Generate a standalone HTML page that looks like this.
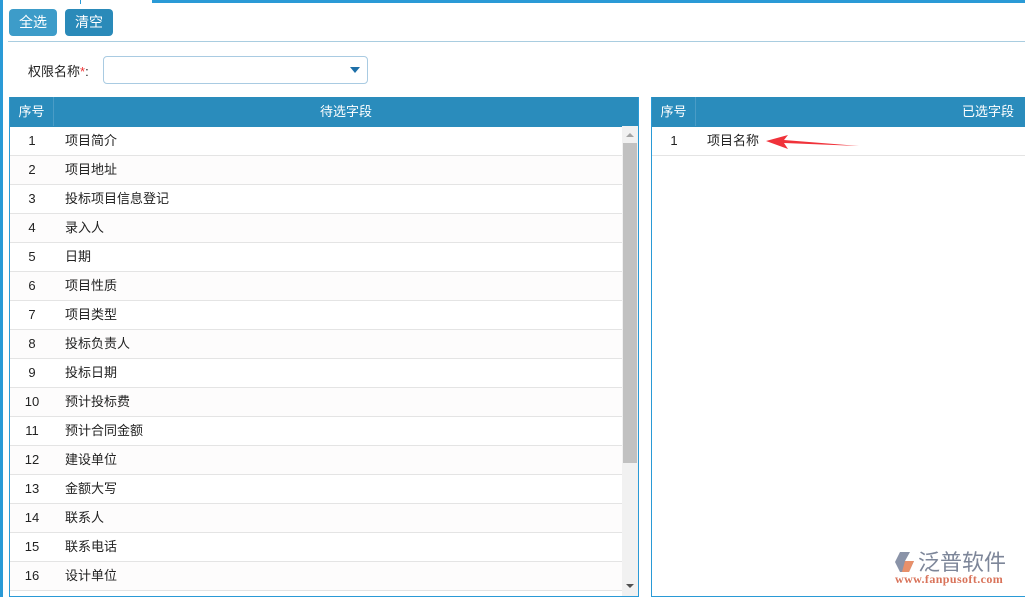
<!DOCTYPE html>
<html><head><meta charset="utf-8"><style>
*{margin:0;padding:0;box-sizing:border-box}
body{width:1025px;height:597px;overflow:hidden;background:#fff;font-family:"Liberation Sans","Noto Sans CJK SC",sans-serif;font-size:13px;color:#222;position:relative}
.abs{position:absolute}
.btn{position:absolute;top:9px;height:27px;border-radius:4px;color:#fff;font-size:14px;line-height:27px;text-align:center}
.tbl{position:absolute;top:97px;border:1px solid #2a9ad6;border-top:none;overflow:hidden}
.hd{height:30px;background:#2a8cbc;color:#fff;font-size:13px;position:relative}
.row{height:29px;border-bottom:1px solid #e4e4e4;position:relative;line-height:28px}
.row:nth-child(even){background:#fdfcfc}
.n{position:absolute;left:0;width:44px;text-align:center}
.t{position:absolute;left:55px}
</style></head><body>
<div class="abs" style="left:0;top:0;width:3px;height:597px;background:#2a9ad6"></div>
<div class="abs" style="left:152px;top:0;width:873px;height:3px;background:#2a9ad6"></div>
<div class="abs" style="left:80px;top:0;width:1px;height:4px;background:#2a9ad6"></div>
<div class="btn" style="left:9px;width:48px;background:#3d9cc9">全选</div>
<div class="btn" style="left:65px;width:48px;background:#2a8ab9">清空</div>
<div class="abs" style="left:8px;top:41px;width:1017px;height:1px;background:#a9cde0"></div>
<div class="abs" style="left:28px;top:61px;font-size:13px">权限名称<span style="color:#e33">*</span>:</div>
<div class="abs" style="left:103px;top:56px;width:265px;height:28px;border:1px solid #a9cbe2;border-radius:4px"></div>
<div class="abs" style="left:350px;top:67px;width:0;height:0;border-left:5px solid transparent;border-right:5px solid transparent;border-top:6px solid #1d6fa8"></div>
<div class="tbl" style="left:9px;width:630px;height:500px">
 <div class="hd"><div class="n" style="line-height:29px;height:29px;border-right:1px solid #4a9cc6">序号</div><div style="position:absolute;left:44px;right:0;text-align:center;line-height:29px">待选字段</div></div>
 <div style="position:relative;width:612px">
 <div class="row"><span class="n">1</span><span class="t">项目简介</span></div>
 <div class="row"><span class="n">2</span><span class="t">项目地址</span></div>
 <div class="row"><span class="n">3</span><span class="t">投标项目信息登记</span></div>
 <div class="row"><span class="n">4</span><span class="t">录入人</span></div>
 <div class="row"><span class="n">5</span><span class="t">日期</span></div>
 <div class="row"><span class="n">6</span><span class="t">项目性质</span></div>
 <div class="row"><span class="n">7</span><span class="t">项目类型</span></div>
 <div class="row"><span class="n">8</span><span class="t">投标负责人</span></div>
 <div class="row"><span class="n">9</span><span class="t">投标日期</span></div>
 <div class="row"><span class="n">10</span><span class="t">预计投标费</span></div>
 <div class="row"><span class="n">11</span><span class="t">预计合同金额</span></div>
 <div class="row"><span class="n">12</span><span class="t">建设单位</span></div>
 <div class="row"><span class="n">13</span><span class="t">金额大写</span></div>
 <div class="row"><span class="n">14</span><span class="t">联系人</span></div>
 <div class="row"><span class="n">15</span><span class="t">联系电话</span></div>
 <div class="row"><span class="n">16</span><span class="t">设计单位</span></div>
 </div>
 <div style="position:absolute;left:612px;top:29px;width:16px;height:471px;background:#f1f1f1">
  <div style="position:absolute;left:4px;top:7px;border-left:4px solid transparent;border-right:4px solid transparent;border-bottom:4px solid #a3a3a3"></div>
  <div style="position:absolute;left:1px;top:17px;width:14px;height:320px;background:#c1c1c1"></div>
  <div style="position:absolute;left:4px;top:458px;border-left:4px solid transparent;border-right:4px solid transparent;border-top:4px solid #505050"></div>
 </div>
</div>
<div class="tbl" style="left:651px;width:380px;height:500px">
 <div class="hd"><div class="n" style="line-height:29px;height:29px;border-right:1px solid #4a9cc6">序号</div><div style="position:absolute;right:16px;line-height:29px">已选字段</div></div>
 <div class="row" style="background:#fff"><span class="n">1</span><span class="t">项目名称</span></div>
</div>
<svg class="abs" style="left:766px;top:135px" width="94" height="16"><polygon points="0,6 22,0 18,5 93,11 18,8 22,14" fill="#f0323a"/></svg>
<svg class="abs" style="left:894px;top:550px" width="24" height="24"><polygon points="6,2 16,2 11,11 20,11 15,22 6,22 1,12" fill="#8a93a8"/><polygon points="11,11 20,11 15,22 8,22" fill="#e8906a"/></svg>
<div class="abs" style="left:918px;top:545px;font-size:22px;color:#7d8699">泛普软件</div>
<div class="abs" style="left:895px;top:572px;font-size:12px;color:#d9735a;font-family:'Liberation Serif',serif;font-weight:bold;letter-spacing:0.4px">www.fanpusoft.com</div>
</body></html>
